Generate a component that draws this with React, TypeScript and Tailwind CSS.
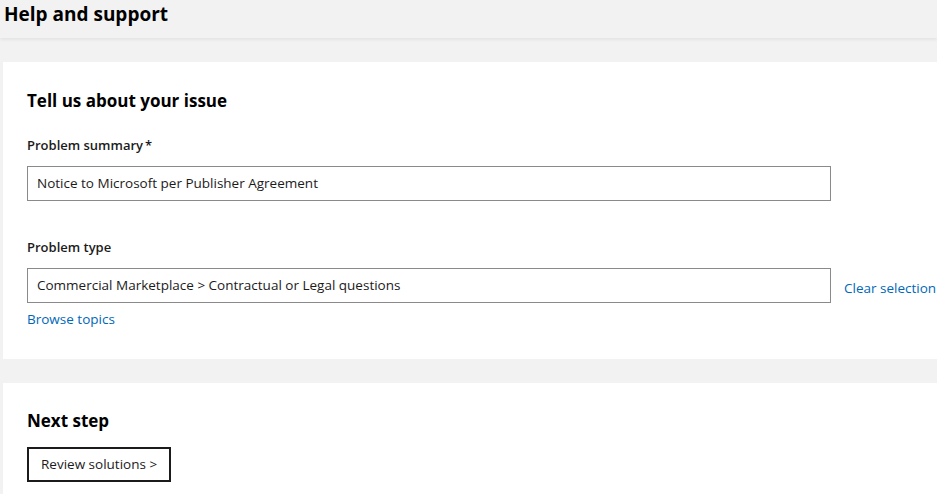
import React from "react";

const font = { fontFamily: '"Open Sans", "Noto Sans", sans-serif' };

function Field({
  label,
  required,
  value,
  aside,
}: {
  label: string;
  required?: boolean;
  value: string;
  aside?: string;
}) {
  return (
    <div className="flex flex-col">
      <div className="text-[13px] font-semibold text-[#1b1b1b] leading-[18px]">
        {label}
        {required && <span className="ml-[2px]">*</span>}
      </div>
      <div className="mt-[12px] flex items-center">
        <div className="w-[804px] h-[35px] border border-[#8a8a8a] flex items-center px-[9px] text-[13.5px] text-[#1b1b1b]">
          {value}
        </div>
        {aside && (
          <a className="ml-[13px] mt-[5px] text-[13.5px] text-[#0067b8] whitespace-nowrap">
            {aside}
          </a>
        )}
      </div>
    </div>
  );
}

export default function App() {
  return (
    <div className="min-h-screen bg-[#f2f2f2] overflow-hidden" style={font}>
      <header className="h-[38px] pl-[4px] pt-[1px] text-[19px] font-bold text-black leading-[26px] shadow-[0_2px_3px_rgba(0,0,0,0.06)]">
        Help and support
      </header>
      <main className="pl-[3px] pt-[24px] flex flex-col gap-[24px]">
        <section className="bg-white h-[297px] pl-[24px] pt-[27px]">
          <h2 className="text-[17px] font-bold text-black leading-[24px]">
            Tell us about your issue
          </h2>
          <div className="mt-[23px]">
            <Field
              label="Problem summary"
              required
              value="Notice to Microsoft per Publisher Agreement"
            />
          </div>
          <div className="mt-[37px]">
            <Field
              label="Problem type"
              value="Commercial Marketplace > Contractual or Legal questions"
              aside="Clear selection"
            />
          </div>
          <a className="block mt-[6px] text-[13.5px] text-[#0067b8] leading-[20px]">
            Browse topics
          </a>
        </section>
        <section className="bg-white h-[120px] pl-[24px] pt-[26px]">
          <h2 className="text-[17px] font-bold text-black leading-[24px]">
            Next step
          </h2>
          <button className="mt-[14px] h-[35px] px-[12px] border-2 border-[#1b1b1b] text-[13.5px] text-[#1b1b1b] bg-white">
            Review solutions &gt;
          </button>
        </section>
      </main>
    </div>
  );
}
